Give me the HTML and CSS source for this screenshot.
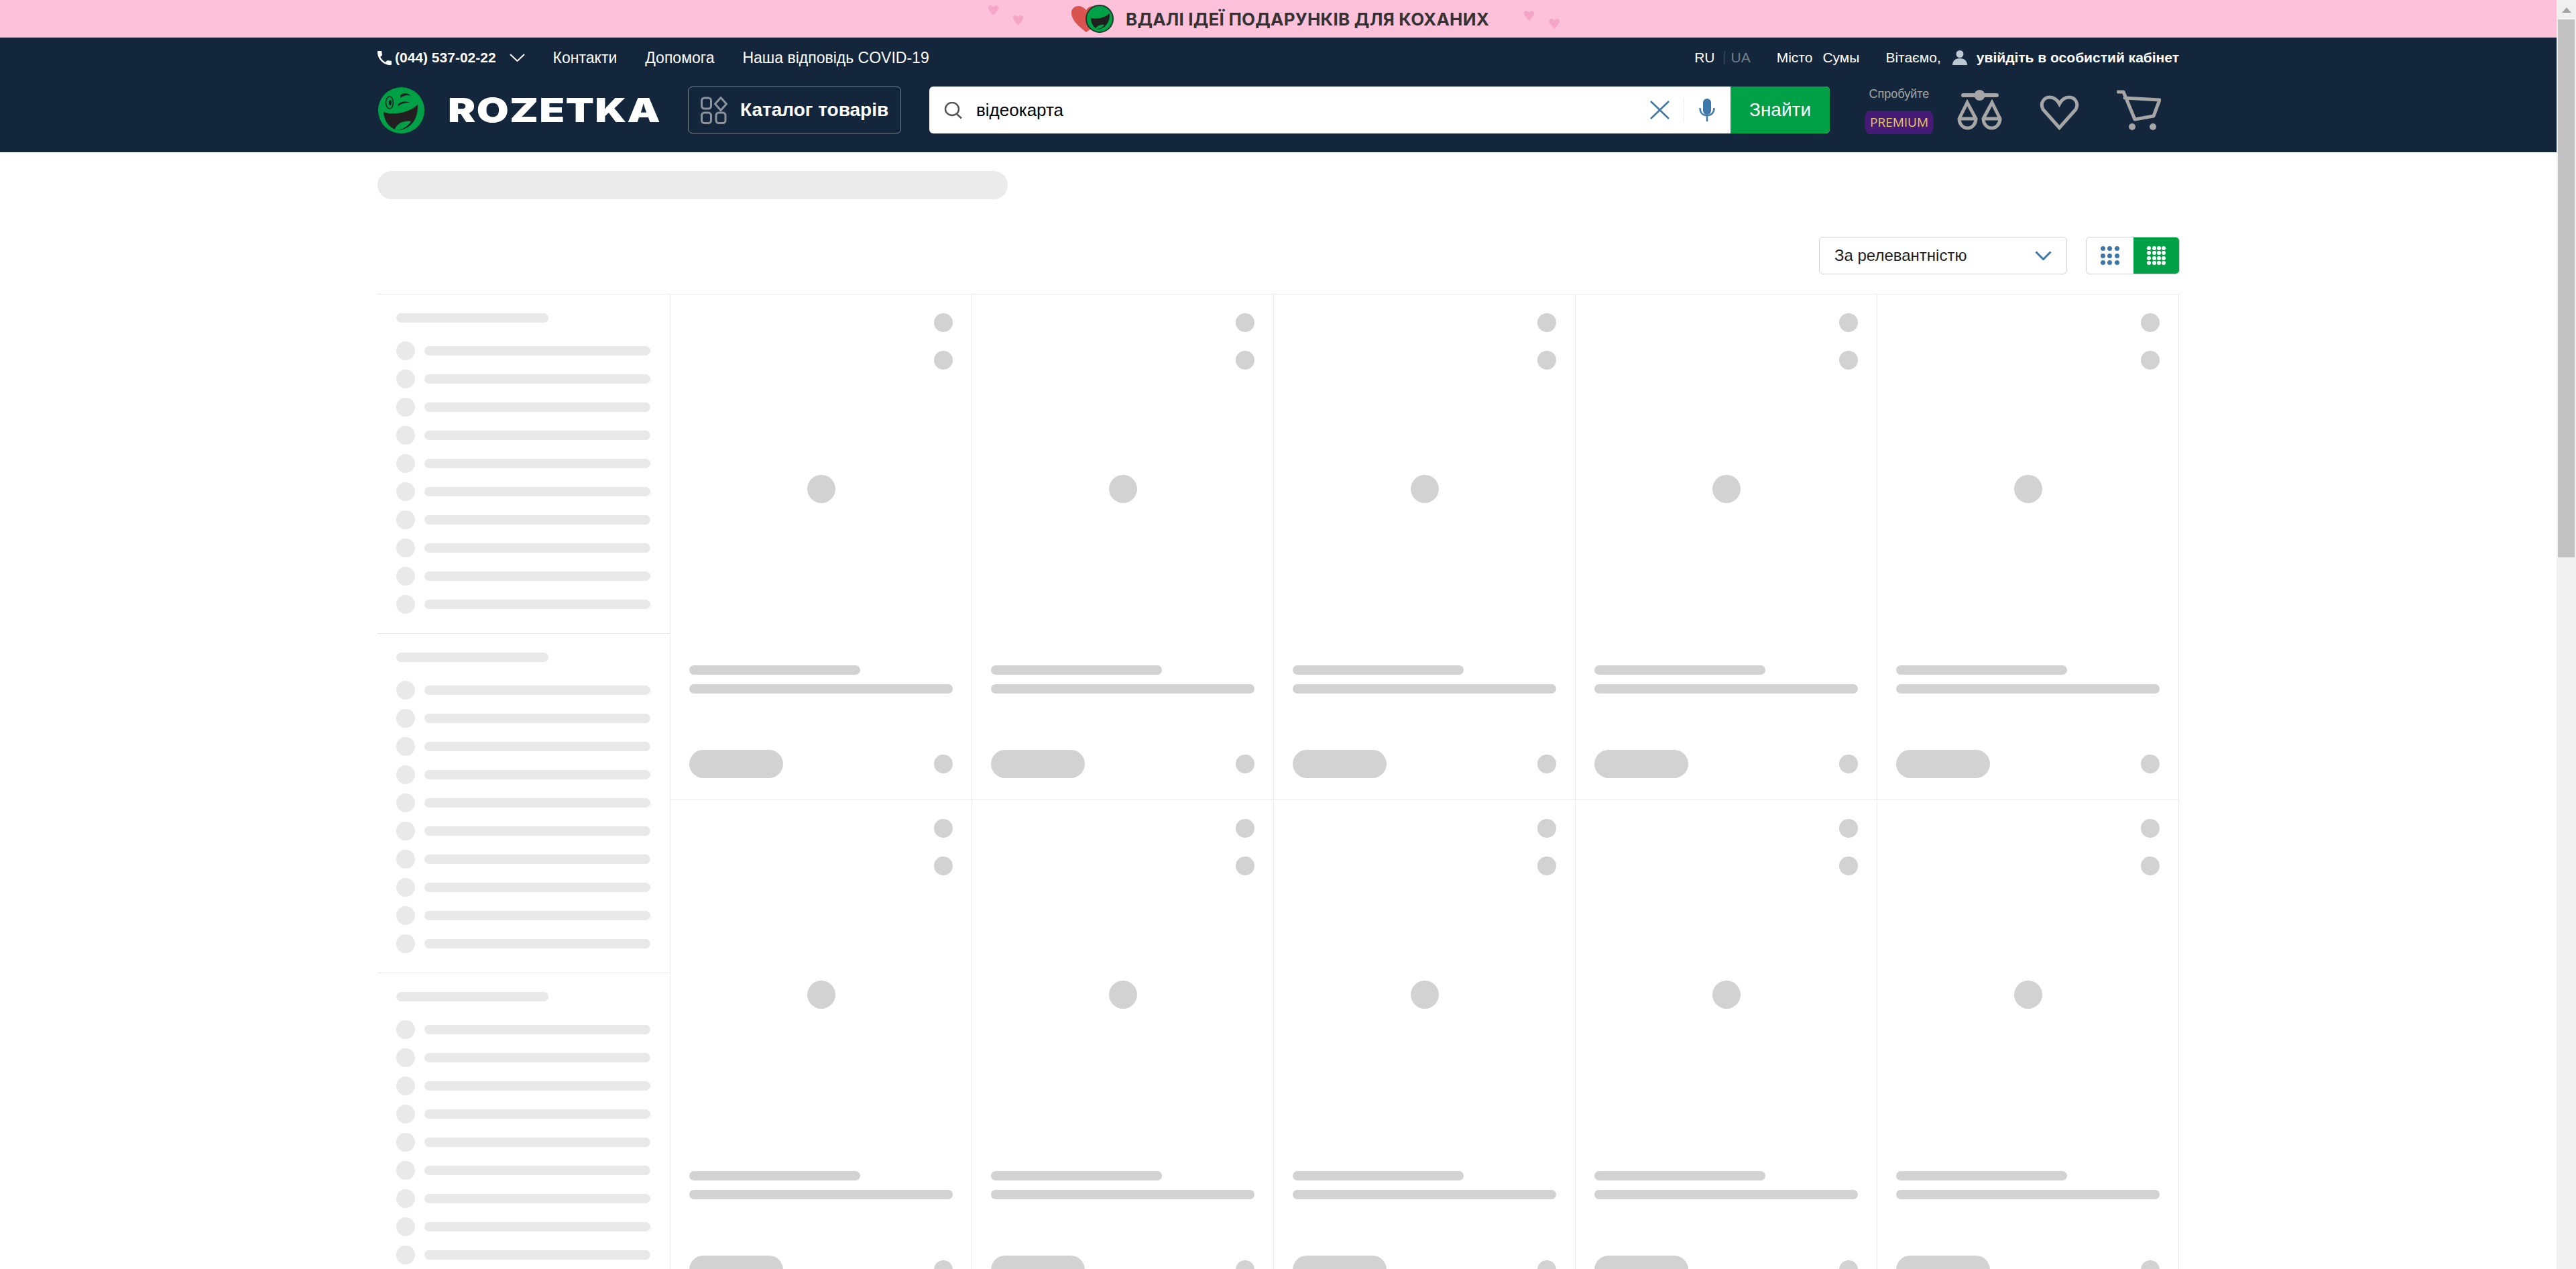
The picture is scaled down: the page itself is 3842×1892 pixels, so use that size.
FILE: index.html
```html
<!DOCTYPE html>
<html lang="uk">
<head>
    <meta charset="UTF-8">
    <title>Rozetka</title>
    <link rel="stylesheet" href="styles.css">
</head>
<body>
<div class="page">
    <!-- Банер -->
    <div class="promo">
        <div class="promo-hearts">
            <svg class="mini-heart" viewBox="0 0 18 18"><path d="M9 17C4 11 1 8 1 5c0-5 6-5 8-1 2-4 8-4 8 1 0 3-3 6-8 12z"/></svg>
            <svg class="mini-heart mini-low" viewBox="0 0 18 18"><path d="M9 17C4 11 1 8 1 5c0-5 6-5 8-1 2-4 8-4 8 1 0 3-3 6-8 12z"/></svg>
        </div>
        <svg class="promo-logo" viewBox="0 0 66 42">
            <path d="M24 41C10 30 2 22 2 12 2 1 16-2 24 8c6-9 16-6 18 0v20z" fill="#d9534f"/>
            <ellipse cx="44" cy="21" rx="20" ry="20" fill="#00a046" stroke="#1b3a2a" stroke-width="2"/>
            <path d="M31 20c9 2 20 0 28-7 1 13-7 23-18 24-6-3-10-10-10-17z" fill="#1f1f1f"/>
            <path d="M38 36c2-5 8-7 13-6-3 5-8 7-13 6z" fill="#00a046"/>
        </svg>
        <span class="promo-text">ВДАЛІ ІДЕЇ ПОДАРУНКІВ ДЛЯ КОХАНИХ</span>
        <div class="promo-hearts promo-hearts-right">
            <svg class="mini-heart" viewBox="0 0 18 18"><path d="M9 17C4 11 1 8 1 5c0-5 6-5 8-1 2-4 8-4 8 1 0 3-3 6-8 12z"/></svg>
            <svg class="mini-heart mini-low" viewBox="0 0 18 18"><path d="M9 17C4 11 1 8 1 5c0-5 6-5 8-1 2-4 8-4 8 1 0 3-3 6-8 12z"/></svg>
        </div>
    </div>

    <!-- Шапка -->
    <header class="header">
        <div class="container">
            <div class="topbar">
                <svg class="phone-icon" viewBox="3 3 18 18"><path d="M6.6 10.8c1.4 2.8 3.8 5.1 6.600 6.600l2.200-2.200c.3-.3.7-.4 1-.2 1.100.4 2.300.6 3.600.6.6 0 1 .4 1 1V20c0 .6-.4 1-1 1C10.600 21 3 13.400 3 4c0-.6.4-1 1-1h3.500c.6 0 1 .4 1 1 0 1.300.2 2.500.6 3.600.1.300 0 .7-.2 1z"/></svg>
                <span class="phone">(044) 537-02-22</span>
                <svg class="phone-arrow" viewBox="0 0 23 12"><path d="M1 1l10.500 10L22 1"/></svg>
                <a class="toplink toplink-first">Контакти</a>
                <a class="toplink">Допомога</a>
                <a class="toplink">Наша відповідь COVID-19</a>
                <div class="topbar-right">
                    <span class="lang">RU</span>
                    <span class="lang-sep"></span>
                    <span class="lang lang-off">UA</span>
                    <span class="city">Місто</span>
                    <span class="city-name">Сумы</span>
                    <span class="hello">Вітаємо,</span>
                    <svg class="user-icon" viewBox="0 0 22 22"><circle cx="11" cy="5.500" r="5.500"/><path d="M0 22c0-6 4-10 11-10s11 4 11 10z"/></svg>
                    <a class="login">увійдіть в особистий кабінет</a>
                </div>
            </div>
            <div class="mainbar">
                <a class="logo">
                    <svg class="logo-face" viewBox="0 0 69 69">
                        <circle cx="34.500" cy="34.500" r="34.500" fill="#00a046"/>
                        <path d="M8 37c14 5 37 2 51-11 1 20-9 35-26 38C19 64 9 52 8 37z" fill="#231f20"/>
                        <path d="M25 63c2-8 13-14 24-12-5 8-14 14-24 12z" fill="#00a046"/>
                        <ellipse cx="17" cy="23" rx="5.500" ry="9" fill="none" stroke="#231f20" stroke-width="1.500"/>
                        <ellipse cx="18" cy="23" rx="2" ry="4" fill="#231f20"/>
                        <path d="M33 12c5-4 11-4 16 1-5-2-10-1-16 3z" fill="#231f20"/>
                        <path d="M29 26c4-4 11-6 18-3-6 0-12 1-17 5z" fill="#231f20"/>
                        <path d="M14 3c6-3 11-3 16-2-6 0-11 1-14 4z" fill="#231f20"/>
                    </svg>
                    <span class="logo-text">ROZETKA</span>
                </a>
                <a class="catalog">
                    <svg class="catalog-icon" viewBox="0 0 40 41">
                        <rect x="1.500" y="2" width="14" height="16" rx="4"/>
                        <path d="M30 1.500L38.500 11 30 20.500 21.500 11z"/>
                        <rect x="1.500" y="24" width="14" height="15.500" rx="4"/>
                        <rect x="23" y="24" width="14" height="15.500" rx="4"/>
                    </svg>
                    Каталог товарів
                </a>
                <div class="search">
                    <svg class="search-icon" viewBox="0 0 28 25"><ellipse cx="12" cy="10.500" rx="10" ry="9.500"/><path d="M19 18l7 6.500"/></svg>
                    <span class="search-value">відеокарта</span>
                    <svg class="search-clear" viewBox="0 0 29 28"><path d="M1 1l27 26M28 1L1 27"/></svg>
                    <span class="search-sep"></span>
                    <svg class="search-mic" viewBox="0 0 24 34"><rect x="6" y="0" width="12" height="24" rx="6" fill="#3e77aa"/><path d="M1.500 14c0 7 4 11 10.500 11s10.500-4 10.500-11M12 25v9" fill="none" stroke="#3e77aa" stroke-width="2.500"/></svg>
                    <button class="search-btn">Знайти</button>
                </div>
                <div class="premium">
                    <span class="premium-try">Спробуйте</span>
                    <span class="premium-badge">PREMIUM</span>
                </div>
                <svg class="compare-icon" viewBox="0 0 69 60">
                    <path d="M10 8h50" stroke-width="6" stroke-linecap="round"/>
                    <circle class="icon-solid" cx="34.500" cy="8" r="8"/>
                    <path d="M16 19L4 43a12.500 14 0 1 0 25 0zM4 43h25"/>
                    <path d="M53 19L40 43a12.500 14 0 1 0 25 0zM40 43h25"/>
                </svg>
                <svg class="wish-icon" viewBox="0 0 59 52"><path d="M29.500 48.500L5 21C0 11 7 3 15 3c7 0 12 5 14.500 10C32 8 37 3 44 3c8 0 15 8 10 18z"/></svg>
                <svg class="cart-icon" viewBox="0 0 66 60">
                    <path d="M2 3h8l17 41 28-5 9-24L12 12" stroke-linejoin="round" stroke-linecap="round"/>
                    <circle class="icon-solid" cx="23" cy="55" r="5"/>
                    <circle class="icon-solid" cx="54" cy="55" r="5"/>
                </svg>
            </div>
        </div>
    </header>

    <!-- Conteudo -->
    <main class="container">
        <div class="title-skeleton"></div>
        <div class="sortbar">
            <div class="sort-select">
                За релевантністю
                <svg class="sort-arrow" viewBox="0 0 25 14"><path d="M1.500 1.500l11 11 11-11"/></svg>
            </div>
            <div class="view-toggle">
                <div class="view-btn">
                    <div class="dots dots-big">
                        <i></i><i></i><i></i><i></i><i></i><i></i><i></i><i></i><i></i>
                    </div>
                </div>
                <div class="view-btn view-btn-active">
                    <div class="dots dots-small">
                        <i></i><i></i><i></i><i></i><i></i><i></i><i></i><i></i><i></i><i></i><i></i><i></i><i></i><i></i><i></i><i></i>
                    </div>
                </div>
            </div>
        </div>
        <div class="catalog-grid">
            <aside class="sidebar" id="sidebar"></aside>
            <div class="cells" id="cells"></div>
        </div>
    </main>
</div>

<div class="scrollbar">
    <div class="scroll-up"></div>
    <div class="scroll-thumb"></div>
</div>

<script>
    // Skeleton do catalogo
    const sidebar = document.getElementById('sidebar');
    for (let s = 0; s < 3; s++) {
        let html = '<div class="side-title"></div>';
        for (let r = 0; r < 10; r++) {
            html += '<div class="side-row"><span class="side-dot"></span><span class="side-bar"></span></div>';
        }
        const section = document.createElement('section');
        section.className = 'side-section';
        section.innerHTML = html;
        sidebar.appendChild(section);
    }

    const cells = document.getElementById('cells');
    for (let c = 0; c < 10; c++) {
        const cell = document.createElement('article');
        cell.className = 'cell';
        cell.innerHTML = `
            <span class="dot cell-action"></span>
            <span class="dot cell-action"></span>
            <span class="cell-image"></span>
            <span class="line line-short"></span>
            <span class="line"></span>
            <div class="cell-bottom"><span class="price"></span><span class="dot"></span></div>`;
        cells.appendChild(cell);
    }
</script>
</body>
</html>
```

FILE: styles.css
```css
* {
    box-sizing: border-box;
}
body {
    margin: 0;
    height: 100vh;
    overflow: hidden;
    display: flex;
    background: #fff;
    font-family: "Liberation Sans", Arial, sans-serif;
    color: #221f1f;
}
svg {
    display: block;
    flex: none;
}
.page {
    flex: 1;
    min-width: 0;
    overflow: hidden;
}
.container {
    width: 2687px;
    margin: 0 auto;
}

/* Banner */
.promo {
    height: 56px;
    padding-right: 13px;
    background: #fdc1da;
    display: flex;
    align-items: center;
    justify-content: center;
}
.promo-hearts {
    width: 54px;
    height: 56px;
    margin-right: 69px;
    display: flex;
    justify-content: space-between;
    padding-top: 7px;
}
.promo-hearts-right {
    width: 55px;
    margin: 0 0 0 53px;
    padding-top: 15px;
}
.mini-heart {
    width: 17px;
    height: 17px;
    fill: #f5a6c7;
}
.mini-low {
    margin-top: 15px;
}
.promo-hearts-right .mini-low {
    margin-top: 12px;
}
.promo-logo {
    width: 66px;
    height: 42px;
    margin-right: 17px;
}
.promo-text {
    width: 540px;
    font-family: Inter, "Noto Sans", sans-serif;
    font-weight: 700;
    font-size: 26px;
    letter-spacing: .2px;
    color: #333;
    white-space: nowrap;
}

/* Header */
.header {
    height: 171px;
    background: #13263b;
    color: #fff;
}
.topbar {
    height: 60px;
    display: flex;
    align-items: center;
    font-size: 21px;
}
.phone-icon {
    width: 21px;
    height: 21px;
    fill: #fff;
    margin-right: 5px;
}
.phone {
    font-weight: 700;
}
.phone-arrow {
    width: 23px;
    height: 12px;
    margin-left: 20px;
    fill: none;
    stroke: #fff;
    stroke-width: 2;
}
.toplink {
    margin-left: 42px;
    font-size: 23px;
    white-space: nowrap;
}
.topbar-right {
    margin-left: auto;
    display: flex;
    align-items: center;
}
.lang-sep {
    width: 1px;
    height: 20px;
    margin: 0 10px 0 13px;
    background: #4a5a6b;
}
.lang-off {
    color: #76808c;
}
.city {
    margin-left: 39px;
}
.city-name {
    margin-left: 15px;
}
.hello {
    margin-left: 39px;
}
.user-icon {
    width: 22px;
    height: 22px;
    margin: 0 14px 0 17px;
    fill: #bcc8d2;
}
.login {
    font-weight: 700;
    white-space: nowrap;
}

.mainbar {
    margin-top: 13px;
    height: 70px;
    display: flex;
    align-items: center;
}
.logo {
    width: 463px;
    display: flex;
    align-items: center;
}
.logo-face {
    width: 69px;
    height: 69px;
    margin-left: 1px;
}
.logo-text {
    margin-left: 35px;
    font-family: Inter, "Liberation Sans", sans-serif;
    font-weight: 900;
    font-size: 50px;
    line-height: 1;
    letter-spacing: 1px;
    transform: scaleX(1.24);
    transform-origin: left center;
}
.catalog {
    width: 318px;
    height: 70px;
    border: 1px solid #77818c;
    border-radius: 6px;
    padding-left: 18px;
    display: flex;
    align-items: center;
    gap: 19px;
    font-weight: 700;
    font-size: 28px;
    white-space: nowrap;
}
.catalog-icon {
    width: 40px;
    height: 41px;
    fill: none;
    stroke: #8b939d;
    stroke-width: 3;
}
.search {
    margin-left: 42px;
    width: 1343px;
    height: 70px;
    background: #fff;
    border-radius: 6px;
    display: flex;
    align-items: center;
    padding-left: 22px;
    overflow: hidden;
}
.search-icon {
    width: 28px;
    height: 25px;
    fill: none;
    stroke: #555;
    stroke-width: 2.500;
}
.search-value {
    margin-left: 20px;
    flex: 1;
    font-size: 26px;
    color: #000;
}
.search-clear {
    width: 29px;
    height: 28px;
    fill: none;
    stroke: #3e77aa;
    stroke-width: 2.500;
}
.search-sep {
    width: 1px;
    height: 36px;
    margin: 0 22px 0 21px;
    background: #eee;
}
.search-mic {
    width: 24px;
    height: 34px;
    margin-right: 23px;
}
.search-btn {
    width: 148px;
    height: 70px;
    border: none;
    background: #00a046;
    color: #fff;
    font-family: inherit;
    font-size: 28px;
    padding: 0;
}
.premium {
    width: 103px;
    margin-left: 52px;
    align-self: flex-start;
    padding-top: 1px;
    display: flex;
    flex-direction: column;
    align-items: center;
    gap: 15px;
}
.premium-try {
    font-size: 18px;
    line-height: 20px;
    color: #a6a6a6;
}
.premium-badge {
    width: 103px;
    height: 35px;
    background: #451b77;
    border-radius: 6px / 50%;
    color: #e6c85c;
    font-family: "Open Sans", sans-serif;
    font-size: 19px;
    line-height: 35px;
    text-align: center;
}
.compare-icon, .wish-icon, .cart-icon {
    fill: none;
    stroke: #a6a6a6;
    stroke-width: 5;
}
.icon-solid {
    fill: #a6a6a6;
    stroke: none;
}
.compare-icon {
    width: 69px;
    height: 60px;
    margin-left: 34px;
}
.wish-icon {
    width: 59px;
    height: 52px;
    margin: 8px 0 0 55px;
}
.cart-icon {
    width: 66px;
    height: 60px;
    margin-left: 56px;
}

/* Conteudo */
.title-skeleton {
    width: 940px;
    height: 42px;
    margin-top: 28px;
    border-radius: 21px;
    background: #ebebeb;
}
.sortbar {
    margin-top: 56px;
    display: flex;
    justify-content: flex-end;
    gap: 28px;
}
.sort-select {
    width: 370px;
    height: 56px;
    border: 1px solid #d2d2d2;
    border-radius: 6px;
    padding: 0 22px;
    display: flex;
    align-items: center;
    justify-content: space-between;
    font-size: 24px;
}
.sort-arrow {
    width: 25px;
    height: 14px;
    fill: none;
    stroke: #3e77aa;
    stroke-width: 3;
}
.view-toggle {
    width: 140px;
    height: 56px;
    margin-right: -1px;
    display: flex;
    border: 1px solid #d2d2d2;
    border-radius: 6px;
    overflow: hidden;
}
.view-btn {
    flex: 1;
    display: flex;
    align-items: center;
    justify-content: center;
}
.view-btn-active {
    margin: -1px -1px -1px 0;
    background: #00a046;
}
.dots {
    width: 28px;
    height: 28px;
    display: grid;
    justify-content: space-between;
    align-content: space-between;
}
.dots i {
    border-radius: 50%;
}
.dots-big {
    grid-template-columns: repeat(3, 7px);
    grid-auto-rows: 7px;
}
.dots-big i {
    background: #3e77aa;
}
.dots-small {
    grid-template-columns: repeat(4, 6px);
    grid-auto-rows: 6px;
}
.dots-small i {
    background: #fff;
}

/* Skeleton */
.catalog-grid {
    margin-top: 29px;
    border-top: 1px solid #e9e9e9;
    display: flex;
    align-items: flex-start;
}
.sidebar {
    width: 437px;
    border-right: 1px solid #e9e9e9;
}
.side-section {
    height: 506px;
    padding: 28px 29px 0 28px;
    border-bottom: 1px solid #e9e9e9;
}
.side-title {
    width: 227px;
    height: 14px;
    margin-bottom: 28px;
    border-radius: 7px;
    background: #e9e9e9;
}
.side-row {
    height: 28px;
    margin-bottom: 14px;
    display: flex;
    align-items: center;
    gap: 14px;
}
.side-dot {
    width: 28px;
    height: 28px;
    border-radius: 50%;
    background: #e9e9e9;
}
.side-bar {
    flex: 1;
    height: 14px;
    border-radius: 7px;
    background: #e9e9e9;
}
.cells {
    display: grid;
    grid-template-columns: repeat(5, 450px);
}
.cell {
    height: 754px;
    padding: 28px 28px 0;
    border-right: 1px solid #e9e9e9;
    border-bottom: 1px solid #e9e9e9;
    display: flex;
    flex-direction: column;
}
.dot {
    display: block;
    width: 28px;
    height: 28px;
    border-radius: 50%;
    background: #d2d2d2;
}
.cell-action {
    align-self: flex-end;
    margin-bottom: 28px;
}
.cell-image {
    width: 42px;
    height: 42px;
    margin: 129px auto 242px;
    border-radius: 50%;
    background: #d2d2d2;
}
.line {
    display: block;
    height: 14px;
    border-radius: 7px;
    background: #d2d2d2;
}
.line-short {
    width: 255px;
    margin-bottom: 14px;
}
.cell-bottom {
    margin-top: 84px;
    display: flex;
    align-items: center;
    justify-content: space-between;
}
.price {
    width: 140px;
    height: 42px;
    border-radius: 21px;
    background: #d2d2d2;
}

/* Scrollbar */
.scrollbar {
    width: 29px;
    flex: none;
    background: #f0f0f0;
    padding: 11px 2px 0;
}
.scroll-up {
    width: 0;
    height: 0;
    margin: 0 auto 10px;
    border-left: 7px solid transparent;
    border-right: 7px solid transparent;
    border-bottom: 8px solid #a3a3a3;
}
.scroll-thumb {
    height: 802px;
    background: #c1c1c1;
}
```
